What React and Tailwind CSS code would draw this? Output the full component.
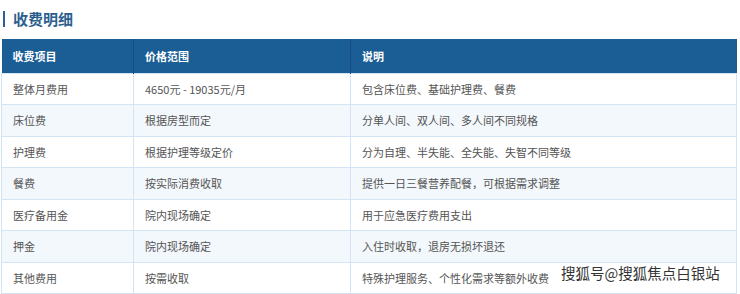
import React from 'react';

const rows = [
  ['整体月费用', '4650元 - 19035元/月', '包含床位费、基础护理费、餐费'],
  ['床位费', '根据房型而定', '分单人间、双人间、多人间不同规格'],
  ['护理费', '根据护理等级定价', '分为自理、半失能、全失能、失智不同等级'],
  ['餐费', '按实际消费收取', '提供一日三餐营养配餐，可根据需求调整'],
  ['医疗备用金', '院内现场确定', '用于应急医疗费用支出'],
  ['押金', '院内现场确定', '入住时收取，退房无损坏退还'],
  ['其他费用', '按需收取', '特殊护理服务、个性化需求等额外收费'],
];

export default function App() {
  return (
    <div className="relative w-[740px] h-[294px] bg-white overflow-hidden font-['Noto_Sans_CJK_SC','Noto_Sans',sans-serif]">
      <div className="flex items-center h-[39px] pl-[3px] pb-[2px]">
        <div className="w-[2px] h-[16px] bg-[#2a6099]" />
        <h2 className="ml-[8px] text-[15px] font-bold leading-none text-[#2d5f8e]">收费明细</h2>
      </div>
      <table className="ml-[1px] w-[736px] border-collapse text-[11px] text-[#555]">
        <thead>
          <tr className="h-[34px] bg-[#1b5e95] text-white font-bold text-left">
            <th className="w-[132px] pl-[11px] border-r border-[#164d7c]">收费项目</th>
            <th className="w-[217px] pl-[11px] border-r border-[#164d7c]">价格范围</th>
            <th className="pl-[11px]">说明</th>
          </tr>
        </thead>
        <tbody>
          {rows.map((r, i) => (
            <tr key={i} className={`h-[31.5px] ${i % 2 === 1 ? 'bg-[#f3f8fc]' : 'bg-white'}`}>
              {r.map((c, j) => (
                <td key={j} className="pl-[11px] border border-[#d3e5f5]">{c}</td>
              ))}
            </tr>
          ))}
        </tbody>
      </table>
      <div className="absolute left-[561px] top-[266px] text-[14.5px] leading-none text-[#333] [text-shadow:0_0_2px_#fff]">
        搜狐号@搜狐焦点白银站
      </div>
    </div>
  );
}
